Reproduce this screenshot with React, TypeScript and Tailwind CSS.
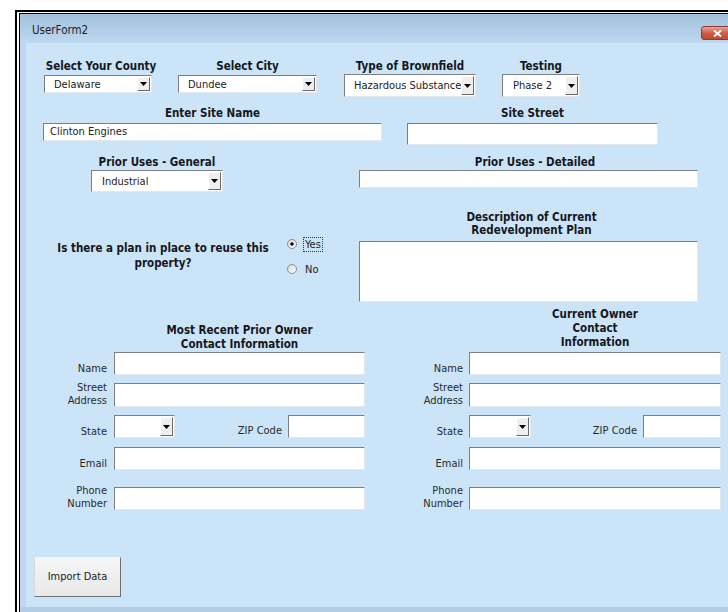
import React from 'react'

const FONT = "font-['DejaVu_Sans_Condensed','DejaVu_Sans',sans-serif] font-stretch-condensed"
const HEAD = 'font-bold text-[11.5px] leading-[14px] text-[#16161c] text-center whitespace-nowrap'
const SUNKEN =
  'bg-white border border-t-[#7e7e7e] border-l-[#7e7e7e] border-r-[#e2e8ee] border-b-[#e2e8ee]'

function DropButton() {
  return (
    <div className="w-[13px] my-[1px] mr-[1px] bg-[#efefef] border border-t-white border-l-white border-r-[#696969] border-b-[#696969] flex items-center justify-center">
      <svg width="7" height="4" viewBox="0 0 7 4">
        <path d="M0 0h7L3.5 4z" fill="#000" />
      </svg>
    </div>
  )
}

function Combo({ value = '', w, h, pad = 'pl-[9px]' }: { value?: string; w: string; h: string; pad?: string }) {
  return (
    <div className={`${SUNKEN} ${w} ${h} flex`}>
      <div className={`flex-1 overflow-hidden whitespace-nowrap text-[11px] leading-none text-[#222] flex items-center ${pad}`}>
        {value}
      </div>
      <DropButton />
    </div>
  )
}

function TextBox({ value = '', w, h }: { value?: string; w: string; h: string }) {
  return (
    <div className={`${SUNKEN} ${w} ${h} flex items-center pl-[6px] text-[11px] text-[#222] whitespace-nowrap overflow-hidden`}>
      {value}
    </div>
  )
}

function Radio({ checked, label, focused }: { checked?: boolean; label: string; focused?: boolean }) {
  return (
    <div className="flex items-center h-[16px]">
      <svg width="10" height="10" viewBox="0 0 10 10">
        <defs>
          <linearGradient id={`rg-${label}`} x1="0" y1="0" x2="1" y2="1">
            <stop offset="0" stopColor="#d8d8d8" />
            <stop offset="1" stopColor="#ffffff" />
          </linearGradient>
        </defs>
        <circle cx="5" cy="5" r="4.5" fill={`url(#rg-${label})`} stroke="#8c8c8c" strokeWidth="1" />
        {checked && <circle cx="5" cy="5" r="1.8" fill="#111" />}
      </svg>
      <span
        className={`ml-[6px] text-[11px] leading-[13px] text-[#222] px-[1px] ${
          focused ? 'border border-dotted border-[#333]' : 'border border-transparent'
        }`}
      >
        {label}
      </span>
    </div>
  )
}

// label column keeps the row at the input's height; two-line labels grow upward
function FieldRow({ label, children, className = '' }: { label: React.ReactNode; children: React.ReactNode; className?: string }) {
  return (
    <div className={`flex items-end ${className}`}>
      <div className="w-[60px] h-[23px] flex flex-col justify-end">
        <div className="text-right text-[11px] leading-[13px] text-[#2a2a2a]">{label}</div>
      </div>
      {children}
    </div>
  )
}

function ContactBlock({
  title,
  gap,
  titleOffset,
  titlePad,
  inputW,
  stateW,
  zipW,
}: {
  title: React.ReactNode
  gap: string
  titleOffset: string
  titlePad: string
  inputW: string
  stateW: string
  zipW: string
}) {
  return (
    <div className="flex flex-col">
      <div className={`h-[46px] flex flex-col justify-end ${titlePad}`}>
        <div className={`${HEAD} ${titleOffset} ${inputW}`}>{title}</div>
      </div>
      <FieldRow label="Name" className="mt-[1px]">
        <div className={gap}>
          <TextBox w={inputW} h="h-[23px]" />
        </div>
      </FieldRow>
      <FieldRow label={<>Street<br />Address</>} className="mt-[8px]">
        <div className={gap}>
          <TextBox w={inputW} h="h-[24px]" />
        </div>
      </FieldRow>
      <FieldRow label="State" className="mt-[8px]">
        <div className={`${gap} ${inputW} flex items-end`}>
          <Combo w={stateW} h="h-[23px]" />
          <div className="flex-1" />
          <span className="text-[11px] leading-[13px] text-[#2a2a2a] pb-[1px] mr-[6px]">ZIP Code</span>
          <TextBox w={zipW} h="h-[23px]" />
        </div>
      </FieldRow>
      <FieldRow label="Email" className="mt-[9px]">
        <div className={gap}>
          <TextBox w={inputW} h="h-[23px]" />
        </div>
      </FieldRow>
      <FieldRow label={<>Phone<br />Number</>} className="mt-[17px]">
        <div className={gap}>
          <TextBox w={inputW} h="h-[23px]" />
        </div>
      </FieldRow>
    </div>
  )
}

export default function App() {
  return (
    <div className={`w-[728px] h-[612px] bg-white overflow-hidden ${FONT}`}>
      {/* window outline */}
      <div className="ml-[15px] mt-[10px] border-l-2 border-t-2 border-black">
        <div className="border-l-2 border-t border-white">
          <div className="border-l border-t border-black w-[720px]">
            {/* title bar */}
            <div className="h-[29px] bg-gradient-to-b from-[#a2c0dd] to-[#bed8ef] flex items-start justify-between">
              <span className="ml-[12px] mt-[9px] text-[11.5px] leading-[14px] text-[#1e1e1e]">UserForm2</span>
              <div className="mt-[12px] w-[38px] h-[14px] rounded-[3px] border border-[#8a3a30] bg-gradient-to-b from-[#e8a497] via-[#cf5a48] to-[#c04a38] flex items-center pl-[11px]">
                <svg width="9" height="7" viewBox="0 0 9 7">
                  <path d="M1 0.5l7 6M8 0.5l-7 6" stroke="#fff" strokeWidth="2" />
                </svg>
              </div>
            </div>

            {/* form body */}
            <div className="h-[564px] bg-[#cbe4f8] border-l-[6px] border-[#bed7ee] flex flex-col">
              {/* county / city / brownfield / testing */}
              <div className="flex items-start pt-[16px] ml-[17px]">
                <div className="w-[116px] flex flex-col">
                  <div className={HEAD}>Select Your County</div>
                  <div className="mt-[2px] ml-[1px]">
                    <Combo value="Delaware" w="w-[108px]" h="h-[18px]" />
                  </div>
                </div>
                <div className="ml-[19px] w-[139px] flex flex-col">
                  <div className={HEAD}>Select City</div>
                  <div className="mt-[2px]">
                    <Combo value="Dundee" w="w-[139px]" h="h-[18px]" />
                  </div>
                </div>
                <div className="ml-[27px] w-[132px] flex flex-col">
                  <div className={HEAD}>Type of Brownfield</div>
                  <div className="mt-[1px]">
                    <Combo value="Hazardous Substances" w="w-[132px]" h="h-[23px]" />
                  </div>
                </div>
                <div className="ml-[26px] w-[78px] flex flex-col">
                  <div className={HEAD}>Testing</div>
                  <div className="mt-[1px]">
                    <Combo value="Phase 2" w="w-[78px]" h="h-[23px]" pad="pl-[10px]" />
                  </div>
                </div>
              </div>

              {/* site name / street */}
              <div className="flex items-start mt-[9px] ml-[17px]">
                <div className="w-[339px] flex flex-col">
                  <div className={HEAD}>Enter Site Name</div>
                  <div className="mt-[3px]">
                    <TextBox value="Clinton Engines" w="w-[339px]" h="h-[18px]" />
                  </div>
                </div>
                <div className="ml-[25px] w-[251px] flex flex-col">
                  <div className={HEAD}>Site Street</div>
                  <div className="mt-[3px]">
                    <TextBox w="w-[251px]" h="h-[22px]" />
                  </div>
                </div>
              </div>

              {/* prior uses */}
              <div className="flex items-start mt-[10px] ml-[65px]">
                <div className="w-[132px] flex flex-col">
                  <div className={HEAD}>Prior Uses - General</div>
                  <div className="mt-[1px]">
                    <Combo value="Industrial" w="w-[132px]" h="h-[22px]" pad="pl-[10px]" />
                  </div>
                </div>
                <div className="ml-[136px] w-[339px] flex flex-col">
                  <div className={`${HEAD} pl-[13px]`}>Prior Uses - Detailed</div>
                  <div className="mt-[1px]">
                    <TextBox w="w-[339px]" h="h-[18px]" />
                  </div>
                </div>
              </div>

              {/* reuse plan */}
              <div className="flex items-start mt-[18px]">
                <div className="w-[333px] flex items-start">
                  <div className="ml-[22px] w-[230px] mt-[31px] font-bold text-[11.5px] leading-[15px] text-[#16161c] text-center">
                    Is there a plan in place to reuse this property?
                  </div>
                  <div className="ml-[9px] mt-[26px] flex flex-col gap-[9px]">
                    <Radio checked focused label="Yes" />
                    <Radio label="No" />
                  </div>
                </div>
                <div className="w-[339px] flex flex-col">
                  <div className="font-bold text-[11.5px] leading-[13px] text-[#16161c] text-center pl-[6px] mt-[1px]">
                    Description of Current
                    <br />
                    Redevelopment Plan
                  </div>
                  <div className="mt-[4px]">
                    <TextBox w="w-[339px]" h="h-[61px]" />
                  </div>
                </div>
              </div>

              {/* owner contacts */}
              <div className="flex items-start mt-[3px] ml-[21px]">
                <ContactBlock
                  title={<>Most Recent Prior Owner<br />Contact Information</>}
                  gap="ml-[7px]"
                  titleOffset="ml-[67px]"
                  titlePad=""
                  inputW="w-[251px]"
                  stateW="w-[61px]"
                  zipW="w-[77px]"
                />
                <div className="ml-[38px]">
                  <ContactBlock
                    title={<>Current Owner<br />Contact<br />Information</>}
                    gap="ml-[6px]"
                    titleOffset="ml-[66px]"
                    titlePad="pb-[2px]"
                    inputW="w-[252px]"
                    stateW="w-[62px]"
                    zipW="w-[78px]"
                  />
                </div>
              </div>

              {/* actions */}
              <div className="mt-[47px] ml-[8px]">
                <button className="w-[87px] h-[40px] bg-gradient-to-b from-[#f6f6f6] to-[#e8e8e8] border border-t-[#f4f4f4] border-l-[#d8d8d8] border-r-[#6f6f6f] border-b-[#6f6f6f] text-[11px] text-[#222]">
                  Import Data
                </button>
              </div>
            </div>
            <div className="h-[5px] bg-[#b4cde6]" />
          </div>
        </div>
      </div>
    </div>
  )
}
